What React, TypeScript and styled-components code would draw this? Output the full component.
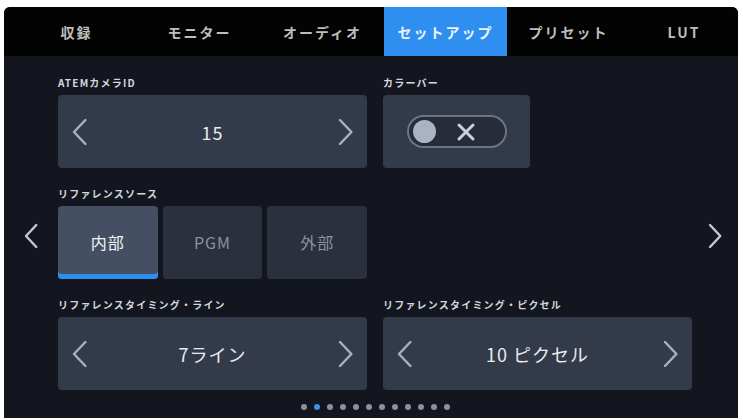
import React from "react";
import styled, { createGlobalStyle } from "styled-components";

const Global = createGlobalStyle`
  html, body { margin: 0; padding: 0; background: #ffffff; }
  body { font-family: "Noto Sans CJK JP", "Noto Sans", sans-serif; }
`;

const Panel = styled.div`
  margin: 7px 0 0 4px;
  width: 734px;
  height: 411px;
  background: #13161e;
  border-radius: 6px 6px 0 0;
  overflow: hidden;
  display: flex;
  flex-direction: column;
`;

const Header = styled.div`
  height: 49px;
  background: #030303;
  display: grid;
  grid-template-columns: repeat(5, 123px) 1fr;
  padding-left: 11px;
  flex-shrink: 0;
`;

const Tab = styled.div<{ $active?: boolean }>`
  display: flex;
  align-items: center;
  justify-content: center;
  background: ${(p) => (p.$active ? "#2f8ff0" : "transparent")};
  color: ${(p) => (p.$active ? "#eef4fc" : "#bdbdbd")};
  font-size: 14px;
  font-weight: 700;
  letter-spacing: 2px;
`;

const Body = styled.div`
  flex: 1;
  display: flex;
`;

const Side = styled.div<{ $w: number }>`
  width: ${(p) => p.$w}px;
  flex-shrink: 0;
  display: flex;
  align-items: center;
  justify-content: center;
  padding-bottom: 2px;
`;

const Content = styled.div`
  width: 634px;
  padding-top: 21px;
  display: flex;
  flex-direction: column;
`;

const Grid = styled.div`
  display: grid;
  grid-template-columns: 309px 309px;
  column-gap: 16px;
  row-gap: 20px;
`;

const Field = styled.div`
  display: flex;
  flex-direction: column;
  gap: 6px;
`;

const Label = styled.div`
  height: 12px;
  line-height: 12px;
  font-size: 10px;
  font-weight: 700;
  letter-spacing: 1.2px;
  color: #d4d7de;
  white-space: nowrap;
`;

const Card = styled.div<{ $w?: number }>`
  width: ${(p) => (p.$w ? `${p.$w}px` : "100%")};
  height: 73px;
  box-sizing: border-box;
  background: #333b4b;
  border-radius: 4px;
  display: flex;
  align-items: center;
  justify-content: space-between;
  padding: 0 14px;
`;

const CenterCard = styled(Card)`
  justify-content: center;
`;

const Value = styled.div`
  color: #e9ebef;
  font-size: 18px;
  letter-spacing: 1px;
`;

const Segments = styled.div`
  display: flex;
  gap: 5px;
`;

const Segment = styled.div<{ $active?: boolean }>`
  width: 100px;
  height: 73px;
  border-radius: 4px;
  background: ${(p) => (p.$active ? "#454f63" : "#2a303c")};
  box-shadow: ${(p) => (p.$active ? "inset 0 -5px 0 #2f8ff0" : "none")};
  color: ${(p) => (p.$active ? "#f2f4f7" : "#8a91a1")};
  font-size: 16px;
  letter-spacing: 1px;
  display: flex;
  align-items: center;
  justify-content: center;
  padding-bottom: 2px;
  box-sizing: border-box;
`;

const Toggle = styled.div`
  width: 100px;
  height: 33px;
  box-sizing: border-box;
  border: 2px solid #6c7486;
  border-radius: 17px;
  background: #262c38;
  display: flex;
  align-items: center;
  padding-left: 4px;
  gap: 20px;
`;

const Knob = styled.div`
  width: 23px;
  height: 23px;
  border-radius: 50%;
  background: #aab3c4;
`;

const Dots = styled.div`
  display: flex;
  justify-content: center;
  gap: 7px;
  margin-top: 14px;
`;

const Dot = styled.div<{ $active?: boolean }>`
  width: 6px;
  height: 6px;
  border-radius: 50%;
  background: ${(p) => (p.$active ? "#3a8fe8" : "#8b9099")};
`;

const Chevron = ({ dir, h = 28, color = "#a9b1c1" }: { dir: "l" | "r"; h?: number; color?: string }) => {
  const w = h * 0.55;
  const d = dir === "l" ? `M${w - 2} 2 L2 ${h / 2} L${w - 2} ${h - 2}` : `M2 2 L${w - 2} ${h / 2} L2 ${h - 2}`;
  return (
    <svg width={w} height={h} viewBox={`0 0 ${w} ${h}`}>
      <path d={d} fill="none" stroke={color} strokeWidth={2.4} strokeLinecap="round" strokeLinejoin="round" />
    </svg>
  );
};

const XMark = () => (
  <svg width="20" height="20" viewBox="0 0 20 20">
    <path d="M3 3 L17 17 M17 3 L3 17" stroke="#cbd0da" strokeWidth={3} strokeLinecap="round" />
  </svg>
);

const Stepper = ({ value }: { value: string }) => (
  <Card>
    <Chevron dir="l" />
    <Value>{value}</Value>
    <Chevron dir="r" />
  </Card>
);

const tabs = ["収録", "モニター", "オーディオ", "セットアップ", "プリセット", "LUT"];

export default function App() {
  return (
    <>
      <Global />
      <Panel>
        <Header>
          {tabs.map((t, i) => (
            <Tab key={t} $active={i === 3}>
              {t}
            </Tab>
          ))}
        </Header>
        <Body>
          <Side $w={54}>
            <Chevron dir="l" h={26} color="#c4c8d0" />
          </Side>
          <Content>
            <Grid>
              <Field>
                <Label>ATEMカメラID</Label>
                <Stepper value="15" />
              </Field>
              <Field>
                <Label>カラーバー</Label>
                <CenterCard $w={147}>
                  <Toggle>
                    <Knob />
                    <XMark />
                  </Toggle>
                </CenterCard>
              </Field>
              <Field>
                <Label>リファレンスソース</Label>
                <Segments>
                  <Segment $active>内部</Segment>
                  <Segment>PGM</Segment>
                  <Segment>外部</Segment>
                </Segments>
              </Field>
              <div />
              <Field>
                <Label>リファレンスタイミング・ライン</Label>
                <Stepper value="7ライン" />
              </Field>
              <Field>
                <Label>リファレンスタイミング・ピクセル</Label>
                <Stepper value="10 ピクセル" />
              </Field>
            </Grid>
            <Dots>
              {Array.from({ length: 12 }).map((_, i) => (
                <Dot key={i} $active={i === 1} />
              ))}
            </Dots>
          </Content>
          <Side $w={46}>
            <Chevron dir="r" h={26} color="#c4c8d0" />
          </Side>
        </Body>
      </Panel>
    </>
  );
}
